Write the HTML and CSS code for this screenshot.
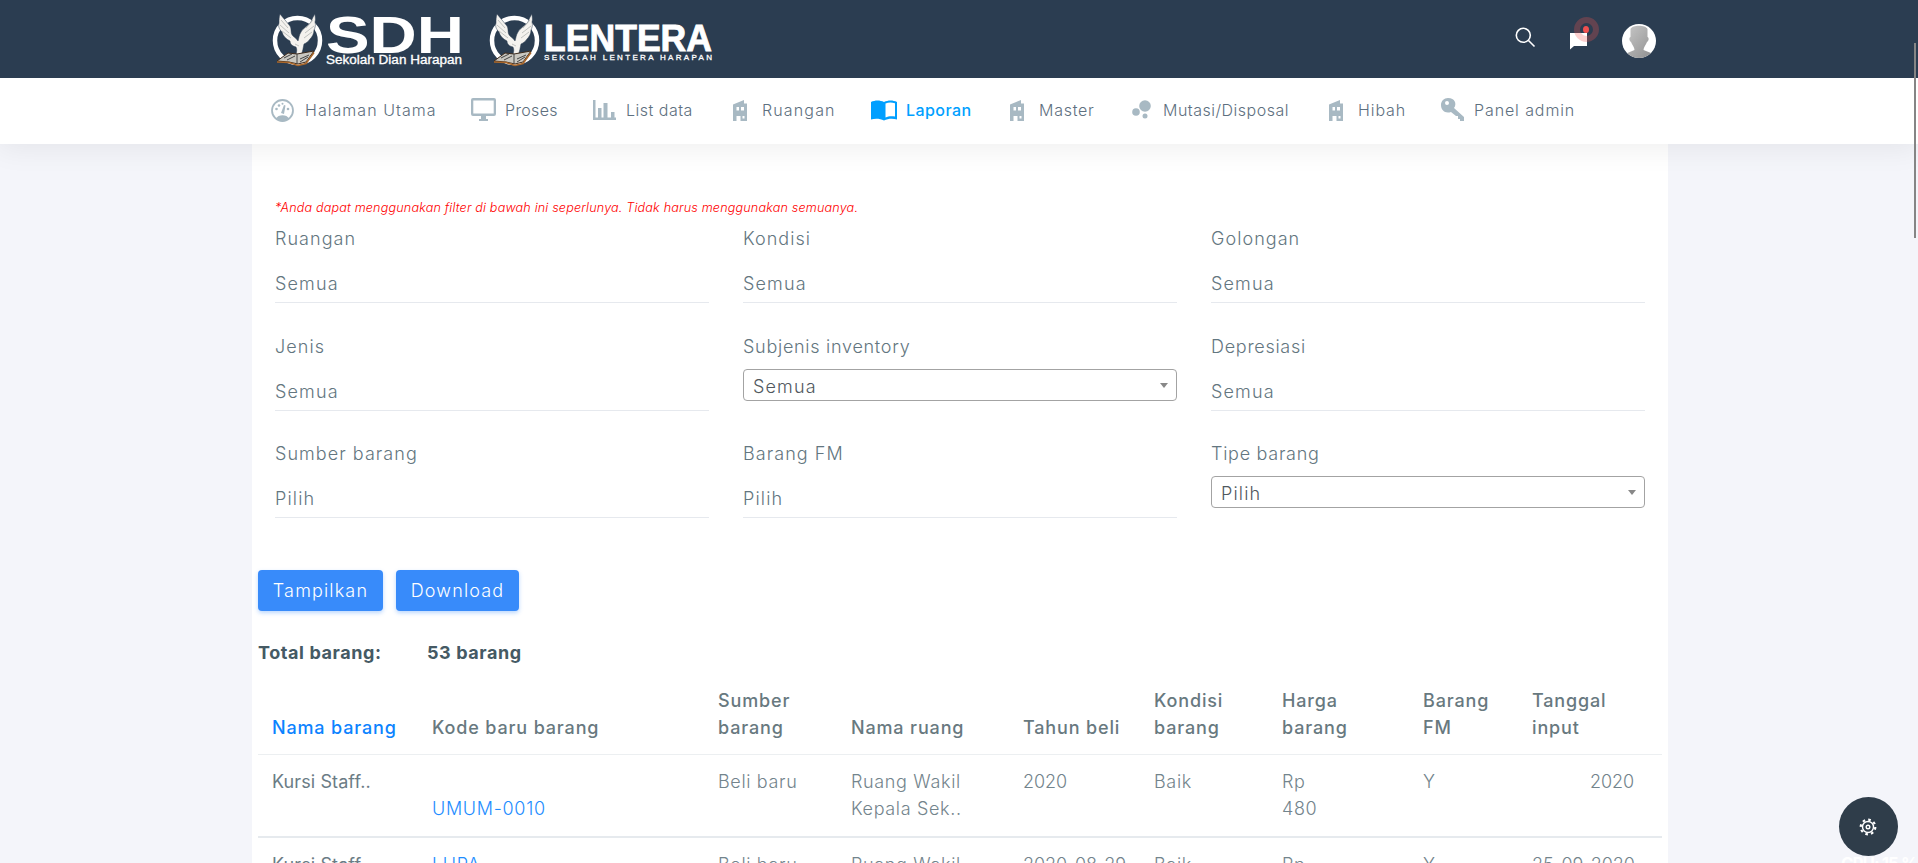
FILE: index.html
```html
<!DOCTYPE html>
<html lang="id">
<head>
<meta charset="utf-8">
<title>Laporan</title>
<link rel="stylesheet" href="styles.css">
</head>
<body>
<svg class="defs" width="0" height="0">
  <defs>
    <symbol id="bird" viewBox="0 0 52 54">
      <circle cx="25.500" cy="27.500" r="22.500" fill="none" stroke="#fff" stroke-width="4.500"/>
      <path d="M8 1c3 4 7 8 10 12 2 4 0 7 3 10 2 2 4 3 5 5 1-3 1-6 3-9 2-4 7-6 10-10 1-3 2-5 4-8 0 3 1 5 0 8 1 3 0 6-1 8 0 4-2 7-4 9-2 3-4 4-6 5-1 4-1 7-3 11l-5-1c1-3 1-5 0-7-4-1-6-3-6-6-4-2-7-5-8-9-3-3-4-6-3-9 0-3 0-6 1-9z" fill="#f4f2ee" stroke="#2b3d51" stroke-width=".5"/>
      <path d="M9 7l7 8M8 12l9 8M10 18l9 7M41 7l-7 8M42 13l-9 7M40 19l-8 6M23 31l4 2" stroke="#b3b5b2" stroke-width=".8" fill="none"/>
      <path d="M5 48l11-8 9 1 17-3-8 11-8 2-9-2z" fill="#c9c7c0" stroke="#3d2a1b" stroke-width="1"/>
      <path d="M5 49l12 .5 9 3 8-2 8-11" fill="none" stroke="#a8662a" stroke-width="1.600"/>
      <path d="M12 45l8-4M15 47l8-4M28 46l9-4M28 49l8-5M25 41v10" stroke="#444" stroke-width="1"/>
    </symbol>
    <symbol id="building" viewBox="0 0 16 21">
      <path fill-rule="evenodd" d="M1 4.500L12 0v3.500h3V21H8.500v-5H4.500v5H1zM4.500 7v3.500h2.500V7zm4.500 0v3.500h3V7zm1.500 9v2.500h2V16z"/>
    </symbol>
  </defs>
</svg>
<header class="topbar">
  <div class="wrap topbar-in">
    <div class="logo sdh">
      <svg class="bird"><use href="#bird"/></svg>
      <svg class="word" width="137" height="55"><text class="heavy" x="0" y="40" textLength="138" lengthAdjust="spacingAndGlyphs" font-size="51">SDH</text><text class="sub" x="0" y="51" textLength="136" lengthAdjust="spacingAndGlyphs" font-size="12">Sekolah Dian Harapan</text></svg>
    </div>
    <div class="logo lentera">
      <svg class="bird"><use href="#bird"/></svg>
      <svg class="word" width="170" height="55"><text class="heavy thick" x="0" y="37.500" textLength="168" lengthAdjust="spacingAndGlyphs" font-size="37.500">LENTERA</text><text class="sub" x="0" y="46.500" textLength="168" font-size="8">SEKOLAH LENTERA HARAPAN</text></svg>
    </div>
    <div class="actions">
      <svg class="search" width="21" height="21" viewBox="0 0 21 21"><circle cx="8.300" cy="8.300" r="7" /><path d="M13.500 13.500l6 6"/></svg>
      <div class="chat"><svg width="18" height="17"><path d="M0 0h17v13H4l-4 3.500z" fill="#fff"/></svg><i class="ring"></i><i class="dot"></i></div>
      <svg class="avatar" width="34" height="34" viewBox="0 0 34 34">
        <defs><linearGradient id="g" x2="1" y2="1"><stop stop-color="#c8c8c8"/><stop offset="1" stop-color="#8e8e8e"/></linearGradient><clipPath id="c"><circle cx="17" cy="17" r="17"/></clipPath></defs>
        <g clip-path="url(#c)"><path d="M0 0h34v34H0z" fill="#fff"/><path d="M8.500 5C10 .500 24 .500 25.500 5v8c2 1 1 4-.5 5-1 3-3.500 5-3.500 8l10 4v5H3v-5l9.500-4c0-3-2.500-5-3.500-8-1.500-1-2.500-4-.5-5z" fill="url(#g)"/></g>
      </svg>
    </div>
  </div>
</header>
<nav class="nav">
  <div class="wrap nav-in">
    <a class="item i1"><svg width="23" height="23" viewBox="0 0 23 23"><circle cx="11.500" cy="11.500" r="10.500" fill="none" stroke="currentColor" stroke-width="1.800"/><path d="M5 19.500c2-4.500 11-4.500 13 0-3 3.500-10 3.500-13 0zM10 14l3-8 1.500.5L13 15z"/><circle cx="5.500" cy="10" r="1.300"/><circle cx="8" cy="6.500" r="1.300"/><circle cx="11.500" cy="4.800" r="1"/><circle cx="17" cy="10" r="1.300"/></svg><span>Halaman Utama</span></a>
    <a class="item i2"><svg width="25" height="24" viewBox="0 0 25 24"><path fill-rule="evenodd" d="M2 0h21q2 0 2 2v14q0 2-2 2h-8v3h2v2H8v-2h2v-3H2q-2 0-2-2V2q0-2 2-2zm.3 2.500v13h20.400v-13z"/></svg><span>Proses</span></a>
    <a class="item i3"><svg width="23" height="20"><path d="M0 0h2.500v17.500H5V8h3.500v9.500h2V3h4v14.500h3.500V12h3.500v5.500H23V20H0z"/></svg><span>List data</span></a>
    <a class="item i4"><svg width="16" height="21"><use href="#building"/></svg><span>Ruangan</span></a>
    <a class="item i5 active"><svg width="26" height="21" viewBox="0 0 26 21"><path fill-rule="evenodd" d="M0 2C4 0 9 0 13 2c4-2 9-2 13 0v17.500c-4-1-9-1-13 1-4-2-9-2-13-1zm14.500 1.500v14c3-1.500 6-1.500 9.500-1V3.200c-3.500-1-6.500-1-9.500.3z"/></svg><span>Laporan</span></a>
    <a class="item i6"><svg width="16" height="21"><use href="#building"/></svg><span>Master</span></a>
    <a class="item i7"><svg width="20" height="20"><circle cx="13" cy="6" r="5.800"/><circle cx="4" cy="12" r="3.800"/><circle cx="13" cy="16" r="2.500"/></svg><span>Mutasi/Disposal</span></a>
    <a class="item i8"><svg width="16" height="21"><use href="#building"/></svg><span>Hibah</span></a>
    <a class="item i9"><svg width="24" height="24" viewBox="0 0 24 24"><path fill-rule="evenodd" d="M7 0c7 0 9 6 6 10l10 9v4h-4v-2h-2v-3h-2l-5-4C4 16 0 12 0 7c0-4 3-7 7-7zM6 3a2 2 0 1 0 .01 4A2 2 0 0 0 6 3z"/></svg><span>Panel admin</span></a>
  </div>
</nav>
<main class="card">
  <p class="note">*Anda dapat menggunakan filter di bawah ini seperlunya. Tidak harus menggunakan semuanya.</p>
  <section class="filters">
    <div class="field"><label>Ruangan</label><div class="line">Semua</div></div>
    <div class="field"><label>Kondisi</label><div class="line">Semua</div></div>
    <div class="field"><label>Golongan</label><div class="line">Semua</div></div>
    <div class="field"><label>Jenis</label><div class="line">Semua</div></div>
    <div class="field"><label class="tight">Subjenis inventory</label><div class="select">Semua</div></div>
    <div class="field"><label class="tight">Depresiasi</label><div class="line">Semua</div></div>
    <div class="field"><label>Sumber barang</label><div class="line">Pilih</div></div>
    <div class="field"><label>Barang FM</label><div class="line">Pilih</div></div>
    <div class="field"><label class="tight">Tipe barang</label><div class="select">Pilih</div></div>
  </section>
  <div class="buttons"><button class="b1">Tampilkan</button><button class="b2">Download</button></div>
  <div class="total"><span>Total barang:</span><span>53 barang</span></div>
  <div class="row head"><b class="sorted">Nama barang</b><b>Kode baru barang</b><b>Sumber<br>barang</b><b>Nama ruang</b><b>Tahun beli</b><b>Kondisi<br>barang</b><b>Harga<br>barang</b><b>Barang<br>FM</b><b>Tanggal<br>input</b></div>
  <div class="row"><span class="name">Kursi Staff..</span><span class="code"><br>UMUM-0010</span><span>Beli baru</span><span>Ruang Wakil<br>Kepala Sek..</span><span class="num">2020</span><span>Baik</span><span>Rp<br>480</span><span>Y</span><span class="num right">2020</span></div>
  <div class="row last"><span class="name">Kursi Staff..</span><span class="code">LUPA</span><span>Beli baru</span><span>Ruang Wakil</span><span class="num">2020-08-29</span><span>Baik</span><span>Rp</span><span>Y</span><span class="num">25-09-2020</span></div>
</main>
<div class="gear"><svg width="18" height="18" viewBox="-9 -9 18 18"><circle r="5.500"/><circle r="1.800"/><circle class="teeth" r="7.300"/></svg></div>
<div class="cpu">CPU: 15 %</div>
<div class="thumb"></div>
</body>
</html>
```
FILE: styles.css
```css
* { box-sizing: border-box; }
html, body { height: 863px; overflow: hidden; }
body { margin: 0; background: #f4f5fa; font-family: Inter, "Open Sans", sans-serif; font-size: 18px; line-height: 27px; color: #637680; font-weight: 350; }
.defs { position: absolute; }
.wrap { width: 1416px; margin: 0 0 0 252px; }
.topbar { background: #2b3d51; height: 78px; }
.topbar-in { display: flex; padding: 13px 12px 0 20px; }
.logo { display: flex; }
.bird { width: 52px; height: 54px; }
.word { display: block; overflow: visible; fill: #fff; font-family: "Liberation Sans", sans-serif; }
.heavy { font-weight: 700; }
.thick { stroke: #fff; stroke-width: .9; }
.sub { stroke: #fff; stroke-width: .3; }
.sdh { width: 217px; }
.sdh .word { margin-left: 2px; }
.lentera .word { margin-left: 3px; }
.actions { margin-left: auto; display: flex; }
.search { fill: none; stroke: #fff; stroke-width: 1.6; margin-top: 14px; }
.chat { position: relative; margin: 17px 35px 0 34px; width: 17px; }
.ring { position: absolute; left: 4px; top: -13px; width: 25px; height: 25px; border-radius: 50%; border: 6px solid rgba(239,83,80,.28); }
.dot { position: absolute; left: 13px; top: -4px; width: 6px; height: 7px; border-radius: 50%; background: #f0504f; }
.avatar { margin-top: 11px; }
.nav { position: relative; z-index: 2; background: #fff; height: 66px; box-shadow: 0 2px 30px 2px rgba(0,0,0,.07); clip-path: inset(0 0 -50px 0); }
.nav-in { display: flex; align-items: center; height: 64px; padding-left: 19px; font-size: 16px; }
.item { display: flex; align-items: center; color: #5e7080; white-space: nowrap; }
.item svg { fill: currentColor; color: #a8b9c3; margin-right: 11px; flex: none; }
.active, .active svg { color: #009fff; }
.active { font-weight: 450; }
.i1 { width: 200px; letter-spacing: 1.05px; }
.i2 { width: 122px; letter-spacing: .35px; }
.i2 svg { margin-right: 9px; }
.i3 { width: 139px; letter-spacing: .5px; }
.i3 svg { margin-right: 10px; }
.i4 { width: 139px; letter-spacing: 1.15px; }
.i4 svg, .i6 svg, .i8 svg { margin-right: 14px; }
.i5 { width: 138px; letter-spacing: .45px; }
.i5 svg { margin-right: 9px; }
.i6 { width: 123px; letter-spacing: .75px; }
.i7 { width: 196px; letter-spacing: .5px; }
.i8 { width: 113px; letter-spacing: .9px; }
.i9 { letter-spacing: .9px; }
.i9 svg { margin-right: 9px; }
.card { width: 1416px; height: 719px; margin: 0 0 0 252px; padding: 52px 6px 0; background: #fff; overflow: hidden; }
.note { margin: 0 0 4px 17px; height: 24px; line-height: 24px; font-size: 12.6px; font-style: italic; color: #f00; letter-spacing: .17px; white-space: nowrap; }
.filters { display: grid; grid-template-columns: repeat(3, 434px); column-gap: 34px; grid-auto-rows: 107.5px; padding-left: 17px; }
.field label { display: block; height: 34px; line-height: 30px; letter-spacing: 1.05px; }
.field label.tight { letter-spacing: .72px; }
.line { height: 50px; margin-top: -5px; padding-top: 17px; border-bottom: 1px solid #e6e9ee; }
.line, .select { letter-spacing: 1.15px; }
.select { position: relative; height: 32px; margin-top: 3px; padding: 3px 9px; border: 1px solid #a3a3a3; border-radius: 4px; color: #50585e; }
.select::after { content: ""; position: absolute; right: 8px; top: 13px; border: 4px solid transparent; border-top: 5px solid #888; border-bottom: 0; }
.buttons { display: flex; gap: 13px; margin-top: 23px; }
button { height: 41px; border: 0; border-radius: 4px; background: #388bfa; color: #fff; font: inherit; padding: 0; box-shadow: 0 2px 4px rgba(56,139,250,.35); letter-spacing: 1.15px; }
.b1 { width: 125px; }
.b2 { width: 123px; }
.total { display: flex; margin-top: 28px; font-weight: 700; color: #455a64; letter-spacing: .58px; }
.total span:first-child { width: 169px; }
.row { display: grid; grid-template-columns: 160px 286px 133px 172px 131px 128px 141px 109px 1fr; padding: 13px 0 0 14px; height: 83px; border-bottom: 2px solid #e6eaee; color: #73848c; font-weight: 300; letter-spacing: .65px; }
.row.head { height: 89px; padding-top: 20px; border-bottom: 1px solid #eceff1; align-items: end; padding-bottom: 13px; }
.row b { font-weight: 500; color: #68797f; letter-spacing: .85px; }
.row b.sorted { color: #0c83ff; }
.row .name { font-weight: 400; color: #6b7c85; letter-spacing: .1px; }
.row .code { color: #1e8dff; letter-spacing: .7px; }
.row .num { letter-spacing: -.1px; }
.right { text-align: right; padding-right: 28px; }
.gear { position: absolute; left: 1839px; top: 797px; width: 59px; height: 59px; border-radius: 50%; background: #2f3d4a; display: flex; align-items: center; justify-content: center; padding-right: 2px; }
.gear svg { fill: none; stroke: #fff; stroke-width: 1.4; }
.gear .teeth { stroke-width: 2.2; stroke-dasharray: 2.6 3.13; }
.cpu { position: absolute; left: 1841px; top: 853px; color: #fff; font-size: 17px; line-height: 22px; font-weight: 700; letter-spacing: -1px; white-space: nowrap; }
.thumb { position: absolute; z-index: 3; left: 1914px; top: 43px; width: 2px; height: 195px; background: #858585; }
```
